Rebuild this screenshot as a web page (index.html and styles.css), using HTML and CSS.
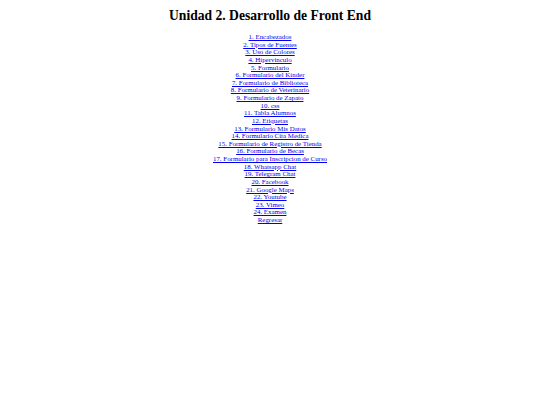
FILE: index.html
```html
<!DOCTYPE html>
<html lang="es">
<head>
<meta charset="utf-8">
<title>Unidad 2</title>
<link rel="stylesheet" href="styles.css">
</head>
<body>
<h1 class="title">Unidad 2. Desarrollo de Front End</h1>
<nav class="links">
<a href="#">1. Encabezados</a>
<a href="#">2. Tipos de Fuentes</a>
<a href="#">3. Uso de Colores</a>
<a href="#">4. Hipervinculo</a>
<a href="#">5. Formulario</a>
<a href="#">6. Formulario del Kinder</a>
<a href="#">7. Formulario de Biblioteca</a>
<a href="#">8. Formulario de Veterinario</a>
<a href="#">9. Formulario de Zapato</a>
<a href="#">10. css</a>
<a href="#">11. Tabla Alumnos</a>
<a href="#">12. Etiquetas</a>
<a href="#">13. Formulario Mis Datos</a>
<a href="#">14. Formulario Cita Medica</a>
<a href="#">15. Formulario de Registro de Tienda</a>
<a href="#">16. Formulario de Becas</a>
<a href="#">17. Formulario para Inscripcion de Curso</a>
<a href="#">18. Whatsapp Chat</a>
<a href="#">19. Telegram Chat</a>
<a href="#">20. Facebook</a>
<a href="#">21. Google Maps</a>
<a href="#">22. Youtube</a>
<a href="#">23. Vimeo</a>
<a href="#">24. Examen</a>
<a href="#">Regresar</a>
</nav>
</body>
</html>
```
FILE: styles.css
```css
body {
  margin: 4px;
  font-family: "Liberation Serif", "Times New Roman", serif;
  background: #fff;
  color: #000;
}
.title {
  font-size: 13.6px;
  line-height: 15.6px;
  font-weight: bold;
  text-align: center;
  margin: 4px 0 9.5px;
}
.links {
  display: flex;
  flex-direction: column;
  align-items: center;
  font-size: 6.9px;
  line-height: 7.62px;
}
.links a {
  color: #0000ee;
  text-decoration: underline;
}
```
